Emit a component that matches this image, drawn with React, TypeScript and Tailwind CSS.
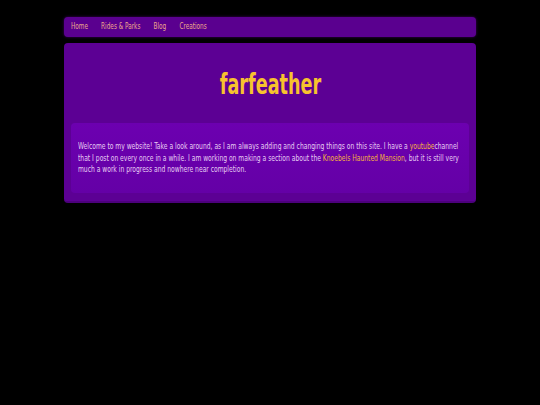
export default function App() {
  const font = { fontFamily: '"DejaVu Sans Condensed", "DejaVu Sans", sans-serif' };
  return (
    <div className="min-h-[405px] w-full overflow-hidden bg-black pt-[17px]" style={font}>
      <div className="mx-auto w-[412px]">
        <nav className="flex h-[20px] items-center overflow-hidden rounded-[4px] bg-[#5a008f] px-[7px] shadow-[0_0_3px_rgba(90,0,140,0.7)]">
          <div className="flex origin-left scale-x-[0.71] gap-[18.5px] whitespace-nowrap text-[9px] text-[#eea88c]">
            <span>Home</span>
            <span>Rides &amp; Parks</span>
            <span>Blog</span>
            <span>Creations</span>
          </div>
        </nav>
        <main className="mt-[6px] rounded-[4px] border-b-[2px] border-[#4c007c] bg-[#5c0094] px-[7px] pb-[8px] pt-[26px]">
          <h1 className="flex justify-center text-[28px] font-bold leading-[32px] text-[#f7c22e]">
            <span className="inline-block scale-x-[0.7]">farfeather</span>
          </h1>
          <div className="mt-[22px] overflow-hidden rounded-[4px] bg-gradient-to-b from-[#6c00b0] to-[#6400a6] px-[7px] pb-[17px] pt-[18px]">
            <div className="w-max origin-left scale-x-[0.743] whitespace-nowrap text-[9px] leading-[11.5px] text-[#e6cdf2]">
              <div>Welcome to my website! Take a look around, as I am always adding and changing things on this site. I have a <span className="text-[#f5b040]">youtube</span>channel</div>
              <div>that I post on every once in a while. I am working on making a section about the <span className="text-[#f5b040]">Knoebels Haunted Mansion</span>, but it is still very</div>
              <div>much a work in progress and nowhere near completion.</div>
            </div>
          </div>
        </main>
      </div>
    </div>
  );
}
